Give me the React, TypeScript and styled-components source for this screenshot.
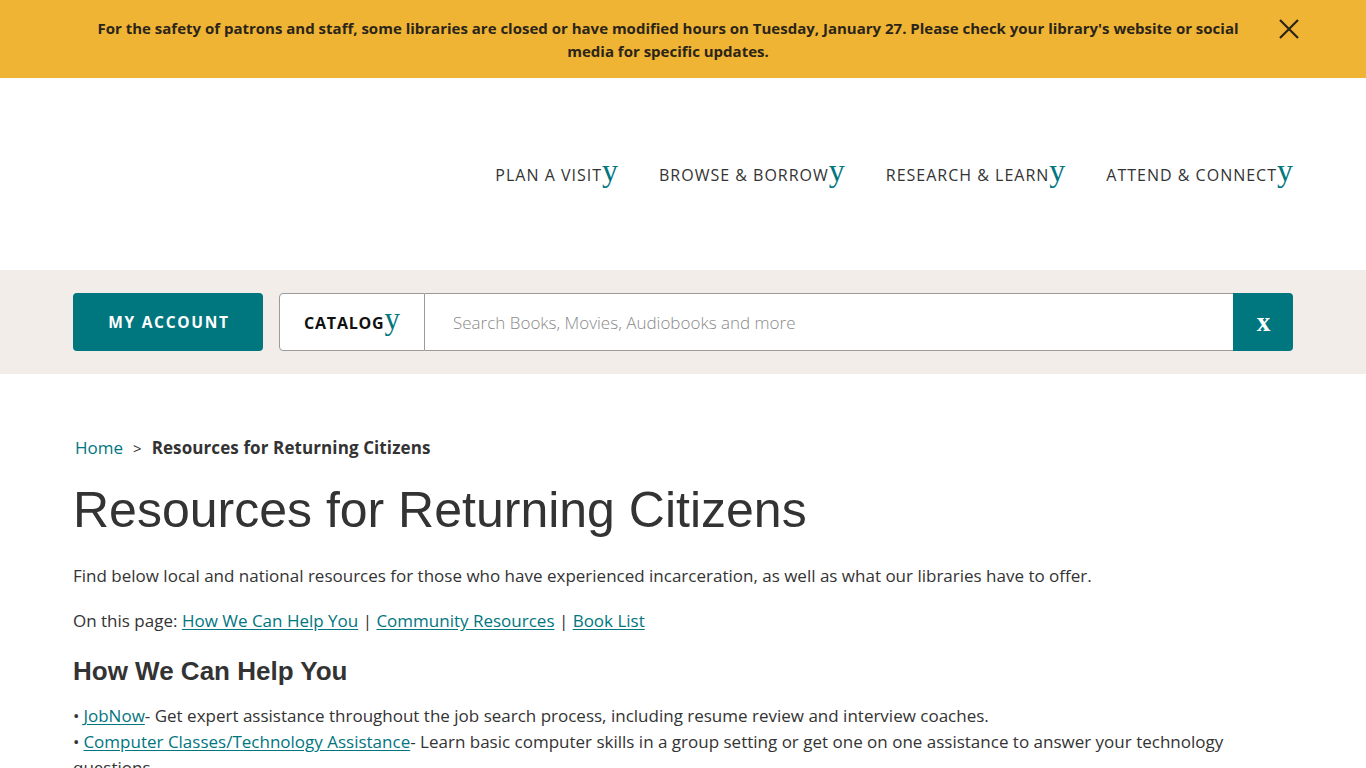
import React from "react";
import styled, { createGlobalStyle } from "styled-components";

const TEAL = "#00767f";
const BODY_FONT = `"Open Sans", "Noto Sans", sans-serif`;

const Global = createGlobalStyle`
  html, body { margin: 0; padding: 0; background: #fff; }
  body { font-family: ${BODY_FONT}; color: #333; }
  * { box-sizing: border-box; }
`;

const Alert = styled.div`
  background: #f0b434;
  height: 78px;
  display: flex;
  align-items: center;
  justify-content: center;
  position: relative;
  padding: 2px 120px 0 90px;
`;

const AlertText = styled.p`
  margin: 0;
  text-align: center;
  font-weight: 700;
  font-size: 15px;
  line-height: 23px;
  color: #2b2519;
  max-width: 1160px;
`;

const CloseBtn = styled.button`
  position: absolute;
  right: 66px;
  top: 18px;
  width: 22px;
  height: 22px;
  padding: 0;
  border: 0;
  background: none;
  display: flex;
  align-items: center;
  justify-content: center;
`;

const Header = styled.header`
  height: 192px;
  display: flex;
  align-items: center;
  justify-content: flex-end;
  padding: 0 73px;
`;

const Nav = styled.nav`
  display: flex;
  gap: 41px;
  margin-top: -8px;
`;

const NavItem = styled.a`
  display: flex;
  align-items: baseline;
  font-size: 16px;
  letter-spacing: 1px;
  color: #333;
  text-transform: uppercase;
  text-decoration: none;
`;

const Chevron = styled.span<{ $size?: number }>`
  font-family: "Liberation Serif", "DejaVu Serif", serif;
  color: ${TEAL};
  font-size: ${(p) => p.$size ?? 32}px;
  line-height: 1;
  letter-spacing: 0;
  text-transform: none;
  font-weight: 400;
  margin-left: 0;
`;

const SearchBand = styled.div`
  background: #f3ede9;
  height: 104px;
  display: flex;
  align-items: center;
  padding: 0 73px;
  gap: 16px;
`;

const AccountBtn = styled.button`
  width: 190px;
  height: 58px;
  background: ${TEAL};
  color: #fff;
  border: 0;
  border-radius: 4px;
  font-family: ${BODY_FONT};
  font-weight: 700;
  font-size: 15.5px;
  letter-spacing: 1.7px;
  padding: 0 0 0 2px;
`;

const SearchGroup = styled.div`
  flex: 1;
  display: flex;
  height: 58px;
`;

const CatalogSel = styled.div`
  width: 146px;
  background: #fff;
  border: 1px solid #9a9a9a;
  border-radius: 4px 0 0 4px;
  display: flex;
  align-items: center;
  justify-content: center;
  padding-bottom: 7px;
`;

const CatalogLabel = styled.span`
  font-weight: 700;
  font-size: 16px;
  letter-spacing: 0.8px;
  color: #111;
  line-height: 1;
`;

const SearchInput = styled.input`
  flex: 1;
  border: 1px solid #9a9a9a;
  border-left: 0;
  border-right: 0;
  background: #fff;
  padding: 0 28px;
  font-family: ${BODY_FONT};
  font-size: 17px;
  font-weight: 300;
  color: #333;
  outline: none;
  &::placeholder { color: #8a8a8a; }
`;

const SearchBtn = styled.button`
  width: 60px;
  background: ${TEAL};
  border: 0;
  border-radius: 0 4px 4px 0;
  color: #fff;
  font-family: "Liberation Serif", "DejaVu Serif", serif;
  font-weight: 700;
  font-size: 27px;
  padding: 0 0 0 1px;
`;

const Main = styled.main`
  padding: 62px 73px 0;
`;

const Crumbs = styled.div`
  font-size: 17px;
  line-height: 24px;
  display: flex;
  align-items: baseline;
  gap: 10px;
  margin-left: 2px;
`;

const CrumbLink = styled.a`
  color: ${TEAL};
  text-decoration: none;
`;

const CrumbSep = styled.span`
  font-size: 15px;
  color: #333;
`;

const CrumbCurrent = styled.span`
  font-weight: 700;
  color: #333;
  letter-spacing: 0.1px;
`;

const Title = styled.h1`
  font-family: "Liberation Sans", Arial, sans-serif;
  font-weight: 400;
  font-size: 50px;
  line-height: 56px;
  color: #333;
  margin: 22px 0 25px;
`;

const Para = styled.p`
  font-size: 17px;
  line-height: 26px;
  margin: 0 0 19px;
`;

const Link = styled.a`
  color: ${TEAL};
  text-decoration: underline;
  text-underline-offset: 2px;
`;

const H2 = styled.h2`
  font-family: "Liberation Sans", Arial, sans-serif;
  font-weight: 700;
  font-size: 26px;
  line-height: 32px;
  color: #333;
  margin: 21px 0 16px;
`;

const List = styled.ul`
  list-style: none;
  margin: 0;
  padding: 0;
  font-size: 17px;
  line-height: 26px;
`;

const Item = styled.li`
  margin: 0;
`;

const Bullet = styled.span`
  margin-right: 4px;
`;

const navItems = ["Plan a Visit", "Browse & Borrow", "Research & Learn", "Attend & Connect"];

export default function App() {
  return (
    <>
      <Global />
      <Alert>
        <AlertText>
          For the safety of patrons and staff, some libraries are closed or have modified hours on Tuesday, January 27. Please check your library's website or social media for specific updates.
        </AlertText>
        <CloseBtn aria-label="close">
          <svg width="20" height="20" viewBox="0 0 20 20">
            <path d="M1 1 L19 19 M19 1 L1 19" stroke="#2b2519" strokeWidth="2.2" fill="none" />
          </svg>
        </CloseBtn>
      </Alert>
      <Header>
        <Nav>
          {navItems.map((n) => (
            <NavItem key={n} href="#">
              {n}
              <Chevron>y</Chevron>
            </NavItem>
          ))}
        </Nav>
      </Header>
      <SearchBand>
        <AccountBtn>MY ACCOUNT</AccountBtn>
        <SearchGroup>
          <CatalogSel>
            <CatalogLabel>
              CATALOG<Chevron $size={31}>y</Chevron>
            </CatalogLabel>
          </CatalogSel>
          <SearchInput placeholder="Search Books, Movies, Audiobooks and more" />
          <SearchBtn>x</SearchBtn>
        </SearchGroup>
      </SearchBand>
      <Main>
        <Crumbs>
          <CrumbLink href="#">Home</CrumbLink>
          <CrumbSep>&gt;</CrumbSep>
          <CrumbCurrent>Resources for Returning Citizens</CrumbCurrent>
        </Crumbs>
        <Title>Resources for Returning Citizens</Title>
        <Para>
          Find below local and national resources for those who have experienced incarceration, as well as what our libraries have to offer.
        </Para>
        <Para>
          On this page: <Link href="#">How We Can Help You</Link> | <Link href="#">Community Resources</Link> | <Link href="#">Book List</Link>
        </Para>
        <H2>How We Can Help You</H2>
        <List>
          <Item>
            <Bullet>•</Bullet><Link href="#">JobNow</Link>- Get expert assistance throughout the job search process, including resume review and interview coaches.
          </Item>
          <Item>
            <Bullet>•</Bullet><Link href="#">Computer Classes/Technology Assistance</Link>- Learn basic computer skills in a group setting or get one on one assistance to answer your technology questions.
          </Item>
        </List>
      </Main>
    </>
  );
}
